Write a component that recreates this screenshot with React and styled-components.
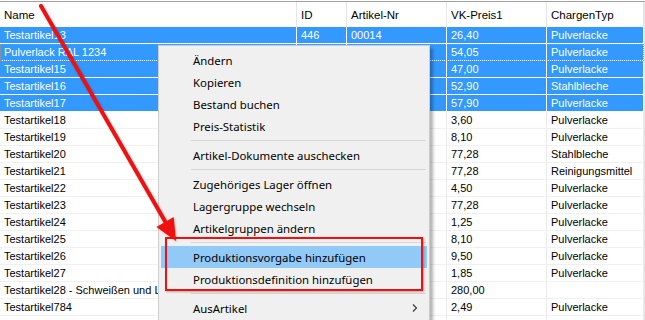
import React from "react";
import styled, { createGlobalStyle } from "styled-components";

const rows = [
  { name: "Testartikel13", id: "446", nr: "00014", price: "26,40", typ: "Pulverlacke", sel: true },
  { name: "Pulverlack RAL 1234", id: "447", nr: "00015", price: "54,05", typ: "Pulverlacke", sel: true, focus: true },
  { name: "Testartikel15", id: "448", nr: "00016", price: "47,00", typ: "Pulverlacke", sel: true },
  { name: "Testartikel16", id: "449", nr: "00017", price: "52,90", typ: "Stahlbleche", sel: true },
  { name: "Testartikel17", id: "450", nr: "00018", price: "57,90", typ: "Pulverlacke", sel: true },
  { name: "Testartikel18", id: "451", nr: "00019", price: "3,60", typ: "Pulverlacke" },
  { name: "Testartikel19", id: "452", nr: "00020", price: "8,10", typ: "Pulverlacke" },
  { name: "Testartikel20", id: "453", nr: "00021", price: "77,28", typ: "Stahlbleche" },
  { name: "Testartikel21", id: "454", nr: "00022", price: "77,28", typ: "Reinigungsmittel" },
  { name: "Testartikel22", id: "455", nr: "00023", price: "4,50", typ: "Pulverlacke" },
  { name: "Testartikel23", id: "456", nr: "00024", price: "77,28", typ: "Pulverlacke" },
  { name: "Testartikel24", id: "457", nr: "00025", price: "1,25", typ: "Pulverlacke" },
  { name: "Testartikel25", id: "458", nr: "00026", price: "8,10", typ: "Pulverlacke" },
  { name: "Testartikel26", id: "459", nr: "00027", price: "9,50", typ: "Pulverlacke" },
  { name: "Testartikel27", id: "460", nr: "00028", price: "1,85", typ: "Pulverlacke" },
  { name: "Testartikel28 - Schweißen und Lackieren", id: "461", nr: "00029", price: "280,00", typ: "" },
  { name: "Testartikel784", id: "462", nr: "00030", price: "2,49", typ: "Pulverlacke" },
  { name: "Testartikel785", id: "463", nr: "00031", price: "3,10", typ: "Pulverlacke" },
];

const menu = [
  { label: "Ändern" },
  { label: "Kopieren" },
  { label: "Bestand buchen" },
  { label: "Preis-Statistik" },
  { sep: true },
  { label: "Artikel-Dokumente auschecken" },
  { sep: true },
  { label: "Zugehöriges Lager öffnen" },
  { label: "Lagergruppe wechseln" },
  { label: "Artikelgruppen ändern" },
  { sep: true },
  { label: "Produktionsvorgabe hinzufügen", hot: true },
  { label: "Produktionsdefinition hinzufügen" },
  { sep: true },
  { label: "AusArtikel", sub: true },
];

const App = () => {
  return (
    <>
      <GlobalStyle />
      <Screen>
        <Grid>
          <HeaderRow>
            <HeadCell>Name</HeadCell>
            <HeadCell>ID</HeadCell>
            <HeadCell>Artikel-Nr</HeadCell>
            <HeadCell>VK-Preis1</HeadCell>
            <HeadCell>ChargenTyp</HeadCell>
          </HeaderRow>
          {rows.map((r, i) => (
            <Row key={i} $sel={r.sel} $focus={r.focus}>
              <Cell $sel={r.sel}>{r.name}</Cell>
              <Cell $sel={r.sel}>{r.id}</Cell>
              <Cell $sel={r.sel}>{r.nr}</Cell>
              <Cell $sel={r.sel}>{r.price}</Cell>
              <Cell $sel={r.sel}>{r.typ}</Cell>
            </Row>
          ))}
        </Grid>

        <ContextMenu>
          {menu.map((m, i) =>
            m.sep ? (
              <Separator key={i} />
            ) : (
              <MenuItem key={i} $hot={m.hot}>
                <span>{m.label}</span>
                {m.sub && (
                  <svg width="8" height="10" viewBox="0 0 8 10">
                    <polyline points="2,1.5 5.5,5 2,8.5" fill="none" stroke="#333" strokeWidth="1.1" />
                  </svg>
                )}
              </MenuItem>
            )
          )}
        </ContextMenu>

        <Highlight />

        <Arrow width="645" height="320" viewBox="0 0 645 320">
          <line x1="41" y1="6" x2="166" y2="223" stroke="#f01010" strokeWidth="4" strokeLinecap="round" />
          <polygon points="176,241 156.4,226.9 173.7,216.9" fill="#f01010" />
        </Arrow>
      </Screen>
    </>
  );
};

export default App;

// Styled Components

const GlobalStyle = createGlobalStyle`
  html, body {
    margin: 0;
    padding: 0;
    background: #ffffff;
    overflow: hidden;
  }
`;

const Screen = styled.div`
  position: relative;
  width: 645px;
  height: 320px;
  overflow: hidden;
  background: #ffffff;
  font-family: "Liberation Sans", Arial, sans-serif;
  font-size: 11px;
`;

const Grid = styled.div`
  display: flex;
  flex-direction: column;
  border-top: 1px solid #a0a0a0;
  margin-top: 1px;
  border-right: 1px solid #e5e5e5;
  width: 644px;
`;

const cols = `297px 50px 100px 100px 1fr`;

const HeaderRow = styled.div`
  display: grid;
  grid-template-columns: ${cols};
  height: 25px;
  background: #ffffff;
`;

const HeadCell = styled.div`
  display: flex;
  align-items: center;
  padding-left: 4px;
  color: #000;
  font-size: 11.5px;
  border-right: 1px solid #e5e5e5;
  white-space: nowrap;
  overflow: hidden;
`;

const Row = styled.div`
  display: grid;
  grid-template-columns: ${cols};
  height: 17px;
  box-sizing: border-box;
  background: ${(p) => (p.$sel ? "#3399ff" : "#ffffff")};
  border-bottom: 1px solid ${(p) => (p.$sel ? "#ffffff" : "#f0f0f0")};
  outline: ${(p) => (p.$focus ? "1px dotted #c88a4a" : "none")};
  outline-offset: -1px;
`;

const Cell = styled.div`
  display: flex;
  align-items: center;
  padding-left: 4px;
  color: ${(p) => (p.$sel ? "#ffffff" : "#000000")};
  border-right: 1px solid ${(p) => (p.$sel ? "#ffffff" : "#eaeaea")};
  white-space: nowrap;
  overflow: hidden;
`;

const ContextMenu = styled.div`
  position: absolute;
  left: 158px;
  top: 45px;
  width: 266px;
  padding: 3px 2px 6px 2px;
  background: #f0f0f0;
  border: 1px solid #cccccc;
  box-shadow: 3px 3px 3px rgba(0, 0, 0, 0.3);
  display: flex;
  flex-direction: column;
  font-family: "Noto Sans", "Liberation Sans", sans-serif;
  font-size: 11.4px;
`;

const MenuItem = styled.div`
  height: 22px;
  display: flex;
  align-items: center;
  justify-content: space-between;
  padding: 0 8px 0 32px;
  background: ${(p) => (p.$hot ? "#91c9f7" : "transparent")};
  color: #000;
  white-space: nowrap;
`;

const Separator = styled.div`
  height: 7px;
  margin-left: 30px;
  margin-right: 1px;
  display: flex;
  align-items: center;

  &::after {
    content: "";
    flex: 1;
    height: 1px;
    background: #d7d7d7;
  }
`;

const Highlight = styled.div`
  position: absolute;
  left: 165px;
  top: 237px;
  width: 258px;
  height: 54px;
  box-sizing: border-box;
  border: 2px solid #f01010;
  box-shadow: 1px 1px 2px rgba(0, 0, 0, 0.3);
`;

const Arrow = styled.svg`
  position: absolute;
  left: 0;
  top: 0;
  pointer-events: none;
  filter: drop-shadow(1px 1px 1px rgba(0, 0, 0, 0.25));
`;
